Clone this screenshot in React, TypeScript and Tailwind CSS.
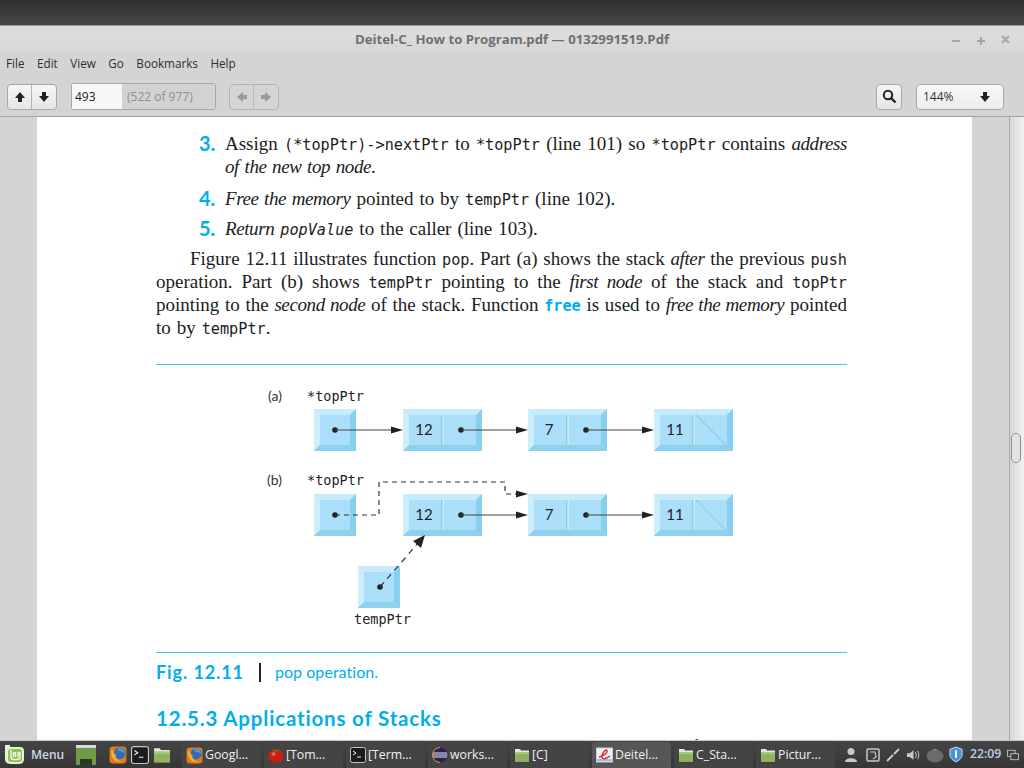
import type { ReactNode } from 'react';

const ui = 'font-["Open_Sans",sans-serif]';
const mono = 'font-["DejaVu_Sans_Mono",monospace]';

function Arrow({ dir, color = '#222' }: { dir: 'up' | 'down' | 'left' | 'right'; color?: string }) {
  const rot = { up: 0, down: 180, left: 270, right: 90 }[dir];
  return (
    <svg width="12" height="12" viewBox="0 0 12 12" style={{ transform: `rotate(${rot}deg)` }}>
      <path d="M6 1 L11 7 H8 V11 H4 V7 H1 Z" fill={color} />
    </svg>
  );
}

function Code({ children }: { children: ReactNode }) {
  return <span className={`${mono} text-[15.2px]`}>{children}</span>;
}

function Em({ children }: { children: ReactNode }) {
  return <i className="tracking-[-0.4px]">{children}</i>;
}

// one justified line of book text
function Line({ children, last }: { children: ReactNode; last?: boolean }) {
  return <div className={`h-[23px] leading-[23px] whitespace-nowrap ${last ? '[word-spacing:1.2px]' : '[text-align:justify] [text-align-last:justify]'}`}>{children}</div>;
}

function Num({ n }: { n: string }) {
  return <span className="font-['Lato',sans-serif] font-bold text-[20px] text-[#00aeef] w-[26px] shrink-0 leading-[23px]">{n}</span>;
}

function Cell({ x, y, w, h = 42 }: { x: number; y: number; w: number; h?: number }) {
  const b = 6;
  return (
    <g>
      <rect x={x} y={y} width={w} height={h} fill="#abdff9" />
      <polygon points={`${x},${y} ${x + w},${y} ${x + w - b},${y + b} ${x + b},${y + b}`} fill="#c6ebfb" />
      <polygon points={`${x},${y} ${x + b},${y + b} ${x + b},${y + h - b} ${x},${y + h}`} fill="#cdeefc" />
      <polygon points={`${x + w},${y} ${x + w - b},${y + b} ${x + w - b},${y + h - b} ${x + w},${y + h}`} fill="#88cfee" />
      <polygon points={`${x},${y + h} ${x + b},${y + h - b} ${x + w - b},${y + h - b} ${x + w},${y + h}`} fill="#8dd1ef" />
    </g>
  );
}

function Pair({ x, y, value, split, nullPtr }: { x: number; y: number; value: string; split: number; nullPtr?: boolean }) {
  return (
    <g>
      <Cell x={x} y={y} w={79} />
      <rect x={x + 38} y={y + 6} width="1.5" height="30" fill="#88cfee" />
      <rect x={x + 39.5} y={y + 6} width="1.5" height="30" fill="#c6ebfb" />
      <text x={x + split} y={y + 26} textAnchor="middle" fontFamily="Lato, sans-serif" fontSize="15" fill="#222">{value}</text>
      {nullPtr && <line x1={x + 42} y1={y + 6} x2={x + 77} y2={y + 41} stroke="#88cfee" strokeWidth="1.2" />}
    </g>
  );
}

function Link({ x1, x2, y }: { x1: number; x2: number; y: number }) {
  return (
    <g>
      <circle cx={x1} cy={y} r="2.8" fill="#222" />
      <line x1={x1} y1={y} x2={x2 - 8} y2={y} stroke="#444" strokeWidth="1.2" />
      <polygon points={`${x2},${y} ${x2 - 12},${y - 3.5} ${x2 - 12},${y + 3.5}`} fill="#222" />
    </g>
  );
}

function Figure() {
  return (
    <svg width="691" height="287" viewBox="156 365 691 287" className="block">
      <g fontFamily="Lato, sans-serif" fontSize="14" fill="#333">
        <text x="268" y="401">(a)</text>
        <text x="267" y="485">(b)</text>
      </g>
      <g fontFamily="'DejaVu Sans Mono', monospace" fontSize="13.5" fill="#222">
        <text x="307" y="401">*topPtr</text>
        <text x="307" y="485">*topPtr</text>
        <text x="354" y="624">tempPtr</text>
      </g>
      {[409, 494].map((y) => (
        <g key={y}>
          <Cell x={314} y={y} w={42} />
          <Pair x={403} y={y} value="12" split={21} />
          <Pair x={528} y={y} value="7" split={21} />
          <Pair x={654} y={y} value="11" split={21} nullPtr />
          <Link x1={461} x2={528} y={y + 21} />
          <Link x1={586} x2={654} y={y + 21} />
        </g>
      ))}
      <Link x1={335} x2={403} y={430} />
      <Cell x={358} y={566} w={42} />
      <circle cx="335" cy="515" r="2.8" fill="#222" />
      <circle cx="380" cy="587" r="2.8" fill="#222" />
      <path d="M335 515 H379 V482 H505 V494 H518" fill="none" stroke="#333" strokeWidth="1.2" strokeDasharray="5 4" />
      <polygon points="528,494 516,490.5 516,497.5" fill="#222" />
      <line x1="380" y1="587" x2="418" y2="543" stroke="#333" strokeWidth="1.2" strokeDasharray="6 5" />
      <polygon points="425,535 421,548 413,541" fill="#222" />
    </svg>
  );
}

function Folder({ size = 16 }: { size?: number }) {
  return (
    <svg width={size} height={size} viewBox="0 0 16 16" className="shrink-0">
      <path d="M1 2 H6 L7 3.5 H15 V14.5 H1 Z" fill="#e4ead8" />
      <rect x="1" y="5" width="14" height="9.5" fill="#8fb35f" />
      <rect x="1" y="5" width="14" height="2" fill="#a9c97c" />
    </svg>
  );
}

function Fox({ size = 17 }: { size?: number }) {
  return (
    <svg width={size} height={size} viewBox="0 0 16 16" className="shrink-0">
      <rect x="0.5" y="0.5" width="15" height="15" rx="3" fill="#e07a1c" />
      <circle cx="9.5" cy="6.5" r="5.2" fill="#2f6db5" />
      <path d="M2 4 C1 11 6 15.5 13 14 C8 13.5 5.5 11 6 7.5 C4.5 7 3.5 6 3.5 3 Z" fill="#f4b032" />
      <path d="M8 2 C11 1 14 3 14 7 C12.5 5 10.5 4.5 8 4 Z" fill="#5b97d8" />
    </svg>
  );
}

function Term({ size = 16 }: { size?: number }) {
  return (
    <svg width={size} height={size} viewBox="0 0 16 16" className="shrink-0">
      <rect x="0.5" y="0.5" width="15" height="15" rx="2" fill="#1c1c1c" stroke="#c4c4c4" />
      <path d="M3 4 L6 6 L3 8 M7 10 H11" fill="none" stroke="#eee" strokeWidth="1" />
    </svg>
  );
}

function Tomato() {
  return (
    <svg width="16" height="16" viewBox="0 0 16 16" className="shrink-0">
      <ellipse cx="8" cy="9" rx="7.8" ry="6.8" fill="#c81e14" />
      <ellipse cx="5.5" cy="7" rx="2.2" ry="1.8" fill="#e8675c" />
      <path d="M4 2 L8 3.5 L12 2 L9.5 4.5 H6.5 Z" fill="#4f8a2a" />
    </svg>
  );
}

function Eclipse() {
  return (
    <svg width="16" height="16" viewBox="0 0 16 16" className="shrink-0">
      <circle cx="8" cy="8" r="7.5" fill="#2c2255" />
      <path d="M1 6 H15 M0.6 8 H15.4 M1 10 H15" stroke="#e8e8f0" strokeWidth="1" />
      <path d="M8 .5 A7.5 7.5 0 0 0 8 15.5" fill="none" stroke="#e89a2a" strokeWidth="1" />
    </svg>
  );
}

function Evince() {
  return (
    <svg width="17" height="16" viewBox="0 0 17 16" className="shrink-0">
      <rect x="0.5" y="1" width="16" height="14" fill="#f0f0f4" stroke="#c9c9d6" />
      <path d="M3 10 C7 9 12 6 11 3.5 C10 1.5 6 6 6 10 C6 13 10 12 14 9" fill="none" stroke="#d8261c" strokeWidth="1.3" />
      <path d="M1 13 H16" stroke="#5f86c8" strokeWidth="1" />
    </svg>
  );
}

function Task({ icon, label, active }: { icon: ReactNode; label: string; active?: boolean }) {
  return (
    <div className={`w-[79px] h-[26px] shrink-0 overflow-hidden rounded-t-[4px] flex items-center gap-[2px] pl-[4px] ${active ? 'bg-[#565656]' : 'bg-[#444444]'}`}>
      {icon}
      <span className="text-[12.3px] text-[#f0f0f0] whitespace-nowrap">{label}</span>
    </div>
  );
}

const tasks = [
  { icon: <Fox />, label: 'Googl...' },
  { icon: <Tomato />, label: '[Tom...' },
  { icon: <Term />, label: '[Term...' },
  { icon: <Eclipse />, label: 'works...' },
  { icon: <Folder />, label: '[C]' },
  { icon: <Evince />, label: 'Deitel...', active: true },
  { icon: <Folder />, label: 'C_Sta...' },
  { icon: <Folder />, label: 'Pictur...' },
];

export default function App() {
  return (
    <div className={`w-[1024px] h-[768px] overflow-hidden flex flex-col bg-[#d4d4d4] ${ui}`}>
      {/* desktop strip above the window */}
      <div className="h-[26px] shrink-0 bg-gradient-to-b from-[#303030] to-[#484848] border-b border-[#9a9a9a]" />

      {/* Title bar */}
      <div className="h-[26px] shrink-0 flex items-center bg-gradient-to-b from-[#dedede] to-[#d7d7d7] pr-[7px] pt-[1px]">
        <div className="flex-1 text-center text-[13.2px] font-bold text-[#707070] pl-[73px]">Deitel-C_ How to Program.pdf — 0132991519.Pdf</div>
        <svg width="66" height="12" viewBox="0 0 66 12">
          <path d="M1 7 H9 M26 7 H34 M30 3 V11 M51 2 L58 9 M58 2 L51 9" stroke="#a6a6a6" strokeWidth="2" fill="none" />
        </svg>
      </div>

      {/* Menu */}
      <div className="h-[22px] shrink-0 flex items-center gap-[12.5px] pl-[6px] pt-[2px] text-[11.7px] text-[#2f2f2f]">
        {['File', 'Edit', 'View', 'Go', 'Bookmarks', 'Help'].map((m) => (
          <span key={m}>{m}</span>
        ))}
      </div>

      {/* Toolbar */}
      <div className="h-[43px] shrink-0 flex items-center pl-[7px] pr-[20px] pt-[3px] border-b border-[#a3a3a3]">
        <div className="w-[50px] h-[26px] flex rounded-[4px] border border-[#a8a8a8] bg-gradient-to-b from-[#f6f6f6] to-[#e6e6e6]">
          <div className="w-[24px] flex items-center justify-center border-r border-[#b5b5b5]"><Arrow dir="up" /></div>
          <div className="flex-1 flex items-center justify-center"><Arrow dir="down" /></div>
        </div>
        <div className="ml-[14px] w-[145px] h-[27px] flex rounded-[3px] border border-[#a8a8a8] text-[12px]">
          <div className="w-[50px] bg-[#f7f7f7] flex items-center pl-[3px] text-[#222]">493</div>
          <div className="flex-1 bg-[#d2d2d2] flex items-center pl-[5px] text-[#8f8f8f]">(522 of 977)</div>
        </div>
        <div className="ml-[13px] w-[50px] h-[26px] flex rounded-[4px] border border-[#b5b5b5]">
          <div className="w-[24px] flex items-center justify-center border-r border-[#bcbcbc]"><Arrow dir="left" color="#9a9a9a" /></div>
          <div className="flex-1 flex items-center justify-center"><Arrow dir="right" color="#9a9a9a" /></div>
        </div>
        <div className="ml-auto w-[26px] h-[26px] flex items-center justify-center rounded-[4px] border border-[#a8a8a8] bg-gradient-to-b from-[#f6f6f6] to-[#e6e6e6]">
          <svg width="15" height="15" viewBox="0 0 15 15">
            <circle cx="6" cy="6" r="4.2" fill="none" stroke="#222" strokeWidth="2" />
            <path d="M9 9 L13.5 13.5" stroke="#222" strokeWidth="2.4" />
          </svg>
        </div>
        <div className="ml-[14px] w-[88px] h-[26px] flex items-center justify-between pl-[6px] pr-[12px] rounded-[4px] border border-[#a8a8a8] bg-gradient-to-b from-[#f8f8f8] to-[#ececec] text-[12px] text-[#333]">
          <span>144%</span>
          <Arrow dir="down" />
        </div>
      </div>

      {/* Document area */}
      <div className="flex-1 min-h-0 flex">
        <div className="flex-1 pl-[37px] pr-[37px] overflow-hidden">
          <div className="w-[935px] h-full bg-white pl-[119px] pr-[125px] pt-[15px] font-['Liberation_Serif',serif] text-[19px] text-[#1c1c1c] overflow-hidden">
            <div className="flex pl-[43px]">
              <Num n="3." />
              <div className="flex-1">
                <Line>Assign <Code>(*topPtr)-&gt;nextPtr</Code> to <Code>*topPtr</Code> (line 101) so <Code>*topPtr</Code> contains <Em>address</Em></Line>
                <Line last><Em>of the new top node</Em>.</Line>
              </div>
            </div>
            <div className="flex pl-[43px] mt-[9px]">
              <Num n="4." />
              <Line last><Em>Free the memory</Em> pointed to by <Code>tempPtr</Code> (line 102).</Line>
            </div>
            <div className="flex pl-[43px] mt-[7px]">
              <Num n="5." />
              <Line last><Em>Return</Em> <Code><i>popValue</i></Code> to the caller (line 103).</Line>
            </div>
            <div className="mt-[7px]">
              <div className="pl-[34px]"><Line>Figure 12.11 illustrates function <Code>pop</Code>. Part (a) shows the stack <Em>after</Em> the previous <Code>push</Code></Line></div>
              <Line>operation. Part (b) shows <Code>tempPtr</Code> pointing to the <Em>first node</Em> of the stack and <Code>topPtr</Code></Line>
              <Line>pointing to the <Em>second node</Em> of the stack. Function <span className={`${mono} text-[15.2px] font-bold text-[#00aeef]`}>free</span> is used to <Em>free the memory</Em> pointed</Line>
              <Line last>to by <Code>tempPtr</Code>.</Line>
            </div>
            <div className="mt-[25px] h-px bg-[#45c6ee]" />
            <Figure />
            <div className="h-px bg-[#45c6ee]" />
            <div className="h-[38px] flex items-center font-['Lato',sans-serif] text-[#00aeef]">
              <span className="font-bold text-[18px] tracking-[0.9px]">Fig. 12.11</span>
              <span className="w-[2px] h-[19px] bg-[#222] ml-[15px] mr-[14px]" />
              <span className="text-[16px] tracking-[0.05px]">pop operation.</span>
            </div>
            <div className="mt-[13px] font-['Lato',sans-serif] font-bold text-[20.5px] tracking-[0.82px] leading-[28px] text-[#00aeef] whitespace-nowrap">12.5.3 Applications of Stacks</div>
            <div className="mt-[3px]"><Line last>Stacks have many interesting applications. For example, whenever a function call is made,</Line></div>
          </div>
        </div>
        <div className="w-[15px] shrink-0 bg-gradient-to-r from-[#d8d8d8] to-[#f0f0f0] border-l border-[#a8a8a8] pl-[1px] pt-[316px]">
          <div className="w-[10px] h-[30px] rounded-[5px] border border-[#8f8f8f] bg-[#e4e4e4]" />
        </div>
      </div>

      {/* Mint panel */}
      <div className="h-[28px] shrink-0 flex items-end bg-gradient-to-b from-[#454545] to-[#363636] border-t border-[#c4c4c4] pl-[4px]">
        <div className="h-[27px] flex items-center shrink-0">
          <svg width="21" height="21" viewBox="0 0 21 21" className="shrink-0">
            <path d="M1 1 H6 V3 H16 C19 3 20 5 20 7 V15 C20 18 18 20 15 20 H7 C3 20 1 18 1 15 Z" fill="#e6f2d2" />
            <rect x="4" y="5" width="14" height="13" rx="3" fill="#8fc255" />
            <path d="M7 6 V13 C7 15 8 15.5 10 15.5 H13 C15 15.5 16 15 16 13 V9 H14 V13 M11.5 13 V9 H9.5 V13" fill="none" stroke="#f2f8e8" strokeWidth="1.4" />
          </svg>
          <span className="ml-[6px] w-[33px] text-[12px] font-semibold text-[#cfd9e8]">Menu</span>
          <svg width="22" height="22" viewBox="0 0 22 22" className="ml-[11px] shrink-0">
            <rect x="1" y="1" width="20" height="20" fill="#6f9a4a" />
            <rect x="1" y="1" width="20" height="3" fill="#d9d9d9" />
            <rect x="5" y="15" width="12" height="6" fill="#2d3a22" />
          </svg>
          <div className="ml-[12px] flex items-center gap-[4px]">
            <Fox size={18} />
            <Term size={18} />
            <Folder size={18} />
          </div>
        </div>
        <div className="ml-[11px] flex gap-[3px]">
          {tasks.map((t) => (
            <Task key={t.label} icon={t.icon} label={t.label} active={t.active} />
          ))}
        </div>
        {/* tray */}
        <div className="h-[27px] flex-1 flex items-center pl-[9px]">
          <svg width="14" height="16" viewBox="0 0 14 16" className="shrink-0"><circle cx="7" cy="4.5" r="3.5" fill="#c8c8c8" /><path d="M1 15 C1 10 13 10 13 15 Z" fill="#c8c8c8" /></svg>
          <svg width="14" height="14" viewBox="0 0 14 14" className="ml-[8px] shrink-0"><rect x="1" y="1" width="12" height="12" rx="1" fill="none" stroke="#c8c8c8" strokeWidth="1.5" /><path d="M4 4 H9 L10 9 L7 11" fill="none" stroke="#c8c8c8" strokeWidth="1.2" /></svg>
          <svg width="15" height="15" viewBox="0 0 15 15" className="ml-[6px] shrink-0"><path d="M1 14 L7 8 M8 7 L13 2" stroke="#c8c8c8" strokeWidth="2" /></svg>
          <svg width="15" height="14" viewBox="0 0 16 14" className="ml-[5px] shrink-0"><path d="M1 5 H4 L8 2 V12 L4 9 H1 Z" fill="#c8c8c8" /><path d="M10 4 Q12 7 10 10 M12.5 2.5 Q15 7 12.5 11.5" fill="none" stroke="#c8c8c8" /></svg>
          <svg width="18" height="16" viewBox="0 0 18 16" className="ml-[5px] shrink-0"><ellipse cx="9" cy="9" rx="8.5" ry="6.5" fill="#6b6b6b" /><path d="M6 2 H12 L9 4 Z" fill="#888" /></svg>
          <svg width="14" height="17" viewBox="0 0 15 17" className="ml-[5px] shrink-0"><path d="M7.5 0.5 L14 3 V9 C14 13 10 15 7.5 16.5 C5 15 1 13 1 9 V3 Z" fill="#4a90d9" stroke="#d5e4f5" /><rect x="6.5" y="4" width="2" height="8" fill="#fff" /></svg>
          <span className="ml-[7px] text-[12.2px] font-semibold text-[#bcd0ea] whitespace-nowrap">22:09</span>
          <svg width="12" height="12" viewBox="0 0 14 12" className="ml-[6px] shrink-0"><rect x="0.5" y="0.5" width="9" height="7" fill="none" stroke="#c8c8c8" /><rect x="4.5" y="4.5" width="9" height="7" fill="#3c3c3c" stroke="#c8c8c8" /></svg>
        </div>
      </div>
    </div>
  );
}
